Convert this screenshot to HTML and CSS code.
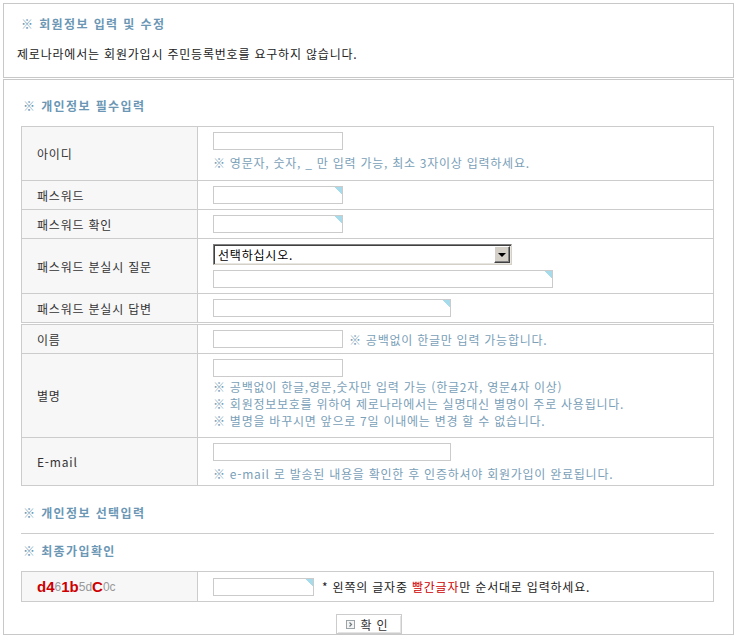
FILE: index.html
```html
<!DOCTYPE html>
<html lang="ko">
<head>
<meta charset="utf-8">
<title>회원정보 입력 및 수정</title>
<link rel="stylesheet" href="styles.css">
</head>
<body>
<div class="box intro">
  <h2 class="sec-title first">※ 회원정보 입력 및 수정</h2>
  <p class="intro-text">제로나라에서는 회원가입시 주민등록번호를 요구하지 않습니다.</p>
</div>
<div class="box main">
  <h3 class="sec-title">※ 개인정보 필수입력</h3>
  <div class="ftable">
    <div class="frow h54">
      <div class="flabel">아이디</div>
      <div class="fval stack">
        <input class="inp w130" type="text">
        <div class="hint mt4">※ 영문자, 숫자, _ 만 입력 가능, 최소 3자이상 입력하세요.</div>
      </div>
    </div>
    <div class="frow h29">
      <div class="flabel">패스워드</div>
      <div class="fval"><input class="inp w130 tri" type="password"></div>
    </div>
    <div class="frow h29">
      <div class="flabel">패스워드 확인</div>
      <div class="fval"><input class="inp w130 tri" type="password"></div>
    </div>
    <div class="frow h55">
      <div class="flabel">패스워드 분실시 질문</div>
      <div class="fval stack">
        <div class="sel">
          <select class="sel-box"><option>선택하십시오.</option></select>
          <span class="sel-btn"></span>
        </div>
        <input class="inp w340 tri mt5" type="text">
      </div>
    </div>
    <div class="frow h29">
      <div class="flabel">패스워드 분실시 답변</div>
      <div class="fval"><input class="inp w238 tri" type="text"></div>
    </div>
  </div>
  <div class="ftable gap1">
    <div class="frow h29">
      <div class="flabel">이름</div>
      <div class="fval"><input class="inp w130" type="text"><span class="hint ml6">※ 공백없이 한글만 입력 가능합니다.</span></div>
    </div>
    <div class="frow h84">
      <div class="flabel">별명</div>
      <div class="fval stack">
        <input class="inp w130" type="text">
        <div class="hint mt1">※ 공백없이 한글,영문,숫자만 입력 가능 (한글2자, 영문4자 이상)</div>
        <div class="hint">※ 회원정보보호를 위하여 제로나라에서는 실명대신 별명이 주로 사용됩니다.</div>
        <div class="hint">※ 별명을 바꾸시면 앞으로 7일 이내에는 변경 할 수 없습니다.</div>
      </div>
    </div>
    <div class="frow h48">
      <div class="flabel">E-mail</div>
      <div class="fval stack">
        <input class="inp w238" type="text">
        <div class="hint mt4">※ e-mail 로 발송된 내용을 확인한 후 인증하셔야 회원가입이 완료됩니다.</div>
      </div>
    </div>
  </div>
  <h3 class="sec-title t2">※ 개인정보 선택입력</h3>
  <div class="rule"></div>
  <h3 class="sec-title t3">※ 최종가입확인</h3>
  <div class="ftable cap">
    <div class="frow h30">
      <div class="flabel captcha"><span class="cb">d4</span><span class="cs">6</span><span class="cb">1b</span><span class="cs">5d</span><span class="cb">C</span><span class="cs">0c</span></div>
      <div class="fval"><input class="inp w100 tri" type="text"><span class="cap-text">* 왼쪽의 글자중 <span class="red">빨간글자</span>만 순서대로 입력하세요.</span></div>
    </div>
  </div>
  <div class="btn-row">
    <button class="btn" type="button"><svg class="btn-ico" width="9" height="9" viewBox="0 0 9 9"><rect x="0.5" y="0.5" width="8" height="8" fill="#f4f4f4" stroke="#9aa4a8"/><path d="M3.5 2.5 L5.5 4.5 L3.5 6.5" fill="none" stroke="#6f7b80" stroke-width="1.2"/></svg><span>확 인</span></button>
  </div>
</div>
</body>
</html>
```
FILE: styles.css
```css
* { box-sizing: border-box; }
body {
  margin: 3px;
  font-family: "Noto Sans CJK KR", "Noto Sans", sans-serif;
  font-size: 12px;
  letter-spacing: 0.8px;
  color: #333;
  background: #fff;
}
.box { border: 1px solid #c8c8c8; }
.intro { height: 75px; padding: 10px 0 0 13px; }
.main { margin-top: 1px; height: 556px; padding: 16px 0 0 17px; }
.sec-title {
  margin: 0;
  font-size: 12px;
  font-weight: bold;
  line-height: 20px;
  letter-spacing: 1.4px;
  color: #6b97b5;
  padding-left: 2px;
}
.sec-title.first { padding-left: 4px; }
.intro-text { margin: 10px 0 0; line-height: 20px; color: #222; }
.ftable {
  width: 693px;
  margin-top: 10px;
  border: 1px solid #ccc;
  border-bottom: none;
}
.ftable.gap1 { margin-top: 1px; }
.frow { display: flex; border-bottom: 1px solid #ccc; }
.h29 { height: 29px; }
.h30 { height: 30px; }
.h48 { height: 48px; }
.h54 { height: 54px; }
.h55 { height: 55px; }
.h84 { height: 84px; }
.flabel {
  width: 176px;
  flex: none;
  border-right: 1px solid #ccc;
  background: #f7f7f7;
  padding-left: 15px;
  display: flex;
  align-items: center;
  color: #333;
}
.fval {
  flex: 1;
  padding-left: 15px;
  display: flex;
  align-items: center;
}
.fval.stack {
  flex-direction: column;
  align-items: flex-start;
  justify-content: flex-start;
  padding-top: 5px;
}
.inp {
  height: 18px;
  border: 1px solid #cbcbcb;
  padding: 0 2px;
  margin: 0;
  background: #fff;
  font: 12px "Noto Sans CJK KR", sans-serif;
  outline: none;
  border-radius: 0;
}
.inp.tri { background: linear-gradient(225deg, #a6dbeb 5px, #fff 5px); }
.w100 { width: 101px; }
.w130 { width: 130px; }
.w238 { width: 238px; }
.w340 { width: 340px; }
.mt1 { margin-top: 1px; }
.mt4 { margin-top: 4px; }
.mt5 { margin-top: 5px; }
.ml6 { margin-left: 6px; }
.hint { color: #7aa0b8; line-height: 17px; white-space: nowrap; letter-spacing: 0.75px; }
.sel { position: relative; width: 299px; height: 21px; }
.sel-box {
  -webkit-appearance: none;
  appearance: none;
  width: 100%;
  height: 100%;
  margin: 0;
  border: 1px solid;
  border-color: #808080 #d4d0c8 #d4d0c8 #808080;
  box-shadow: inset 1px 1px #404040, inset -1px -1px #e8e6e0;
  border-radius: 0;
  background: #fff;
  color: #000;
  font: 12px "Noto Sans CJK KR", sans-serif;
  letter-spacing: 0.8px;
  padding: 0 0 0 4px;
  outline: none;
}
.sel-btn {
  position: absolute;
  right: 2px;
  top: 2px;
  width: 16px;
  height: 17px;
  background: #d4d0c8;
  border: 1px solid;
  border-color: #fff #404040 #404040 #fff;
  box-shadow: inset -1px -1px #808080;
}
.sel-btn::after {
  content: "";
  position: absolute;
  left: 3px;
  top: 6px;
  border-left: 4px solid transparent;
  border-right: 4px solid transparent;
  border-top: 4px solid #000;
}
.t2 { margin-top: 17px; }
.rule { width: 693px; border-top: 1px solid #ccc; margin-top: 10px; }
.t3 { margin-top: 7px; }
.captcha { padding-left: 15px; align-items: center; letter-spacing: 0; }
.cb { color: #cc0000; font: bold 15px "Liberation Sans", Arial, sans-serif; }
.cs { color: #999; font: 12px "Liberation Sans", Arial, sans-serif; }
.cap-text { margin-left: 8px; color: #222; }
.red { color: #cc0000; }
.btn-row { margin-top: 12px; display: flex; justify-content: center; padding-right: 17px; }
.btn {
  display: flex;
  align-items: center;
  gap: 6px;
  width: 66px;
  height: 20px;
  margin: 0;
  padding: 0 0 0 9px;
  border: 1px solid #ccc;
  box-shadow: inset 1px 1px #fff, inset -1px -1px #e4e4e4;
  background: #fff;
  font: 12px "Noto Sans CJK KR", sans-serif;
  letter-spacing: 0.8px;
  color: #333;
  border-radius: 0;
}
.btn-ico { flex: none; }
```
